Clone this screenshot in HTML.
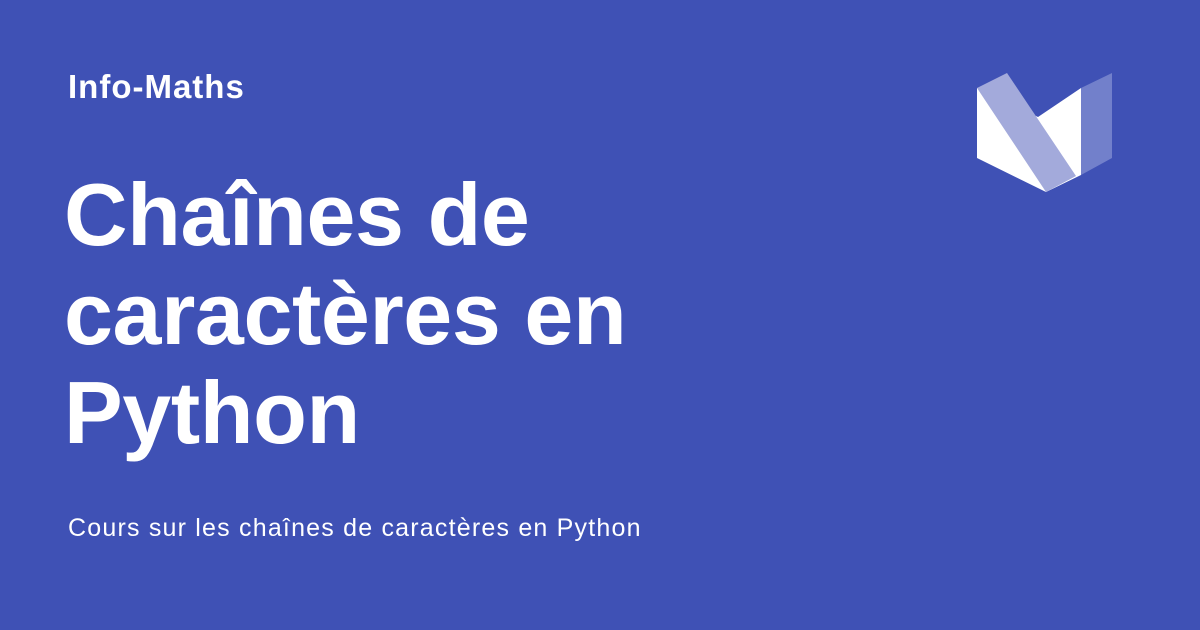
<!DOCTYPE html>
<html><head><meta charset="utf-8"><style>
html,body{margin:0;padding:0}
body{width:1200px;height:630px;background:#3f51b5;position:relative;overflow:hidden;font-family:"Liberation Sans",sans-serif;color:#fff}
.site{position:absolute;left:68px;top:68px;font-size:33px;font-weight:bold;letter-spacing:1px}
.title{position:absolute;left:64px;top:165px;font-size:88px;font-weight:bold;line-height:99px;letter-spacing:-0.4px}
.desc{position:absolute;left:68px;top:514px;font-size:25px;letter-spacing:1.2px}
svg{position:absolute;left:0;top:0}
</style></head><body>
<div class="site">Info-Maths</div>
<div class="title">Chaînes de<br>caractères en<br>Python</div>
<div class="desc">Cours sur les chaînes de caractères en Python</div>
<svg width="1200" height="630">
<polygon points="977,88 1038,117 1081,88 1081,175 1046,192 977,158" fill="#fff"/>
<polygon points="977,88 1007,73 1076,176 1046,192" fill="#a3aadb"/>
<polygon points="1081,88 1112,73 1112,158 1081,175" fill="#7280cb"/>
</svg>
</body></html>
